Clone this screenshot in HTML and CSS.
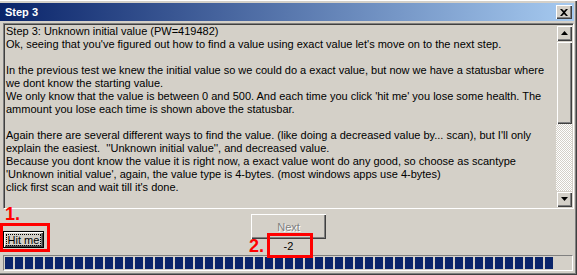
FILE: index.html
```html
<!DOCTYPE html>
<html lang="en">
<head>
<meta charset="utf-8">
<title>Step 3</title>
<link rel="stylesheet" href="styles.css">
</head>
<body>
<div class="window">
  <div class="titlebar">
    <span class="title">Step 3</span>
    <button class="close" type="button">
      <svg width="8" height="7" viewBox="0 0 8 7"><path d="M0 0h2l2 2 2-2h2L5 3.5 8 7H6L4 5 2 7H0l3-3.5z" fill="#000"/></svg>
    </button>
  </div>

  <div class="memo">
    <div class="memo-text">
      Step 3: Unknown initial value (PW=419482)<br>
      Ok, seeing that you've figured out how to find a value using exact value let's move on to the next step.<br>
      <br>
      In the previous test we knew the initial value so we could do a exact value, but now we have a statusbar where<br>
      we dont know the starting value.<br>
      We only know that the value is between 0 and 500. And each time you click 'hit me' you lose some health. The<br>
      ammount you lose each time is shown above the statusbar.<br>
      <br>
      Again there are several different ways to find the value. (like doing a decreased value by... scan), but I'll only<br>
      explain the easiest. &nbsp;''Unknown initial value'', and decreased value.<br>
      Because you dont know the value it is right now, a exact value wont do any good, so choose as scantype<br>
      'Unknown initial value', again, the value type is 4-bytes. (most windows apps use 4-bytes)<br>
      click first scan and wait till it's done.
    </div>
    <div class="scrollbar">
      <div class="sb-btn"><svg width="7" height="4" viewBox="0 0 7 4"><path d="M3.5 0L7 4H0z" fill="#000"/></svg></div>
      <div class="sb-thumb"></div>
      <div class="sb-track"></div>
      <div class="sb-btn"><svg width="7" height="4" viewBox="0 0 7 4"><path d="M0 0h7L3.5 4z" fill="#000"/></svg></div>
    </div>
  </div>

  <div class="controls">
    <button class="hit" type="button"><span class="focus">Hit me</span></button>
    <div class="center">
      <button class="next" type="button" disabled>Next</button>
      <div class="health">-2</div>
    </div>
  </div>

  <div class="progress"><div class="fill"></div></div>

  <!-- tutorial markers drawn over the window -->
  <span class="mark mark-1">1.</span>
  <div class="ring ring-1"></div>
  <span class="mark mark-2">2.</span>
  <div class="ring ring-2"></div>
</div>
</body>
</html>
```

FILE: styles.css
```css
body {
  margin: 0;
  background-color: #d4d0c8;
  font-family: "Liberation Sans", Arial, sans-serif;
  font-size: 11px;
  color: #000;
}
.window {
  position: relative;
  width: 577px;
  height: 275px;
  box-sizing: border-box;
  padding-top: 2px;
  border-top: 1px solid #ffffff;
  background-color: #d4d0c8;
  box-shadow: inset -1px -1px #404040, inset -2px -2px #808080;
  overflow: hidden;
}
.titlebar {
  height: 18px;
  margin-right: 3px;
  display: flex;
  align-items: center;
  justify-content: space-between;
  padding: 0 2px 0 5px;
  background: linear-gradient(to right, #0a246a, #a6caf0);
}
.title {
  color: #fff;
  font-weight: bold;
  font-size: 11px;
}
.close {
  width: 16px;
  height: 14px;
  padding: 0;
  border: 0;
  display: flex;
  align-items: center;
  justify-content: center;
  background-color: #d4d0c8;
  box-shadow: inset 1px 1px #ffffff, inset -1px -1px #404040, inset -2px -2px #808080;
}
.memo {
  margin: 2px 3px 0 3px;
  height: 186px;
  box-sizing: border-box;
  display: flex;
  border-top: 1px solid #808080;
  border-left: 1px solid #808080;
  border-bottom: 1px solid #ffffff;
  border-right: 1px solid #ffffff;
  box-shadow: inset 1px 1px #404040, inset -1px -1px #d4d0c8;
  padding: 1px;
}
.memo-text {
  flex: 1;
  padding-left: 1px;
  line-height: 13px;
  white-space: nowrap;
  overflow: hidden;
}
.scrollbar {
  width: 16px;
  display: flex;
  flex-direction: column;
}
.sb-btn, .sb-thumb {
  background-color: #d4d0c8;
  box-shadow: inset 1px 1px #d4d0c8, inset 2px 2px #ffffff, inset -1px -1px #404040, inset -2px -2px #808080;
}
.sb-btn {
  height: 16px;
  display: flex;
  align-items: center;
  justify-content: center;
}
.sb-thumb {
  height: 83px;
}
.sb-track {
  flex: 1;
  background: repeating-conic-gradient(#ffffff 0 25%, #d4d0c8 0 50%) 0 0 / 2px 2px;
}
.controls {
  display: flex;
  align-items: flex-start;
  height: 46px;
  padding-left: 3px;
}
.hit {
  margin-top: 22px;
  width: 41px;
  height: 17px;
  padding: 0;
  border: 1px solid #000;
  font-family: inherit;
  font-size: 11px;
  color: #000;
  background-color: #d4d0c8;
  box-shadow: inset 1px 1px #ffffff, inset -1px -1px #404040, inset -2px -2px #808080;
}
.focus {
  display: inline-block;
  outline: 1px dotted #000;
  padding: 0 1px;
  line-height: 10px;
}
.center {
  margin-left: 207px;
  margin-top: 5px;
  width: 75px;
  display: flex;
  flex-direction: column;
}
.next {
  width: 75px;
  height: 25px;
  padding: 0;
  border: 0;
  font-family: inherit;
  font-size: 11px;
  color: #808080;
  text-shadow: 1px 1px #ffffff;
  background-color: #d4d0c8;
  box-shadow: inset 1px 1px #ffffff, inset -1px -1px #404040, inset -2px -2px #808080;
}
.health {
  margin-top: 1px;
  line-height: 13px;
  text-align: center;
}
.progress {
  margin-left: 3px;
  width: 570px;
  height: 16px;
  box-sizing: border-box;
  border-top: 1px solid #808080;
  border-left: 1px solid #808080;
  border-bottom: 1px solid #ffffff;
  border-right: 1px solid #ffffff;
  padding: 1px;
}
.fill {
  width: 550px;
  height: 12px;
  background: repeating-linear-gradient(to right, #0a246a 0 8px, transparent 8px 10px);
}
.mark {
  position: absolute;
  color: #ff0000;
  font-weight: bold;
  font-size: 18px;
  line-height: 18px;
}
.mark-1 {
  left: 5px;
  top: 204px;
}
.mark-2 {
  left: 249px;
  top: 236px;
}
.ring {
  position: absolute;
  box-sizing: border-box;
  border: 3px solid #ff0000;
}
.ring-1 {
  left: 0;
  top: 222px;
  width: 50px;
  height: 29px;
}
.ring-2 {
  left: 267px;
  top: 232px;
  width: 46px;
  height: 25px;
}
```
